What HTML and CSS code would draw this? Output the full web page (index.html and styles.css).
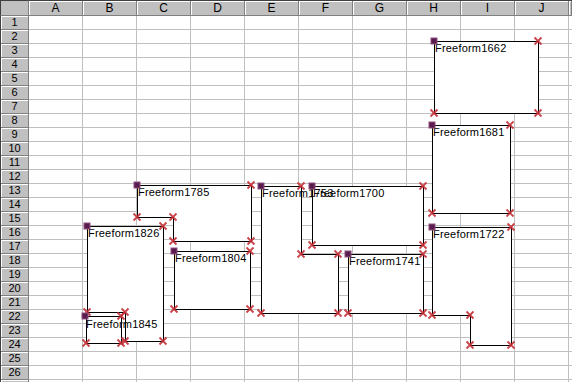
FILE: index.html
```html
<!DOCTYPE html>
<html lang="en">
<head>
    <meta charset="UTF-8">
    <title>Freeforms</title>
    <link rel="stylesheet" href="styles.css">
</head>
<body>

    <div class="sheet">
        <div class="corner"></div>
        <div class="col-heads">
            <div class="ch">A</div>
            <div class="ch">B</div>
            <div class="ch">C</div>
            <div class="ch">D</div>
            <div class="ch">E</div>
            <div class="ch">F</div>
            <div class="ch">G</div>
            <div class="ch">H</div>
            <div class="ch">I</div>
            <div class="ch">J</div>
            <div class="ch rest"></div>
        </div>
        <div class="row-heads">
            <div class="rh">1</div>
            <div class="rh">2</div>
            <div class="rh">3</div>
            <div class="rh">4</div>
            <div class="rh">5</div>
            <div class="rh">6</div>
            <div class="rh">7</div>
            <div class="rh">8</div>
            <div class="rh">9</div>
            <div class="rh">10</div>
            <div class="rh">11</div>
            <div class="rh">12</div>
            <div class="rh">13</div>
            <div class="rh">14</div>
            <div class="rh">15</div>
            <div class="rh">16</div>
            <div class="rh">17</div>
            <div class="rh">18</div>
            <div class="rh">19</div>
            <div class="rh">20</div>
            <div class="rh">21</div>
            <div class="rh">22</div>
            <div class="rh">23</div>
            <div class="rh">24</div>
            <div class="rh">25</div>
            <div class="rh">26</div>
            <div class="rh"></div>
        </div>
        <div class="cells"></div>

        <!-- freeform shapes drawn over the cells -->
        <svg class="shapes" width="572" height="382" viewBox="0 0 572 382">
            <defs>
                <path id="x" d="M-3.5,-3.5L3.5,3.5M3.5,-3.5L-3.5,3.5" class="mark-x"/>
                <rect id="s" x="-3" y="-3" width="6" height="6" class="mark-s"/>
            </defs>

            <g class="ff">
                <polygon points="434.5,41.5 538.5,41.5 538.5,113.5 434.5,113.5"/>
                <polygon points="432.5,125.5 510.5,125.5 510.5,213.5 432.5,213.5"/>
                <polygon points="312.5,186.5 423.5,186.5 423.5,245.5 312.5,245.5"/>
                <polygon points="432.5,227.5 511.5,227.5 511.5,345.5 470.5,345.5 470.5,315.5 432.5,315.5"/>
                <polygon points="348.5,254.5 423.5,254.5 423.5,313.5 348.5,313.5"/>
                <polygon points="261.5,186.5 301.5,186.5 301.5,254.5 338.5,254.5 338.5,313.5 261.5,313.5"/>
                <polygon points="137.5,185.5 251.5,185.5 251.5,241.5 173.5,241.5 173.5,217.5 137.5,217.5"/>
                <polygon points="174.5,251.5 250.5,251.5 250.5,309.5 174.5,309.5"/>
                <polygon points="87.5,226.5 163.5,226.5 163.5,341.5 125.5,341.5 125.5,312.5 87.5,312.5"/>
                <polygon points="86.5,316.5 121.5,316.5 121.5,343.5 86.5,343.5"/>
            </g>

            <g class="lbl">
                <text x="435" y="52">Freeform1662</text>
                <text x="433" y="136">Freeform1681</text>
                <text x="313" y="197">Freeform1700</text>
                <text x="433" y="238">Freeform1722</text>
                <text x="349" y="265">Freeform1741</text>
                <text x="262" y="197">Freeform1753</text>
                <text x="138" y="196">Freeform1785</text>
                <text x="175" y="262">Freeform1804</text>
                <text x="88" y="237">Freeform1826</text>
                <text x="86" y="328">Freeform1845</text>
            </g>

            <g>
                <use href="#x" x="538" y="41"/><use href="#x" x="538" y="113"/><use href="#x" x="434" y="113"/>
                <use href="#x" x="510" y="125"/><use href="#x" x="510" y="213"/><use href="#x" x="432" y="213"/>
                <use href="#x" x="423" y="186"/><use href="#x" x="423" y="245"/><use href="#x" x="312" y="245"/>
                <use href="#x" x="511" y="227"/><use href="#x" x="511" y="345"/><use href="#x" x="470" y="345"/><use href="#x" x="470" y="315"/><use href="#x" x="432" y="315"/>
                <use href="#x" x="423" y="254"/><use href="#x" x="423" y="313"/><use href="#x" x="348" y="313"/>
                <use href="#x" x="301" y="186"/><use href="#x" x="301" y="254"/><use href="#x" x="338" y="254"/><use href="#x" x="338" y="313"/><use href="#x" x="261" y="313"/>
                <use href="#x" x="251" y="185"/><use href="#x" x="251" y="241"/><use href="#x" x="173" y="241"/><use href="#x" x="173" y="217"/><use href="#x" x="137" y="217"/>
                <use href="#x" x="250" y="251"/><use href="#x" x="250" y="309"/><use href="#x" x="174" y="309"/>
                <use href="#x" x="163" y="226"/><use href="#x" x="163" y="341"/><use href="#x" x="125" y="341"/><use href="#x" x="125" y="312"/><use href="#x" x="87" y="312"/>
                <use href="#x" x="121" y="316"/><use href="#x" x="121" y="343"/><use href="#x" x="86" y="343"/>
            </g>

            <g>
                <use href="#s" x="434" y="41"/>
                <use href="#s" x="432" y="125"/>
                <use href="#s" x="312" y="186"/>
                <use href="#s" x="432" y="227"/>
                <use href="#s" x="348" y="254"/>
                <use href="#s" x="261" y="186"/>
                <use href="#s" x="137" y="185"/>
                <use href="#s" x="174" y="251"/>
                <use href="#s" x="87" y="226"/>
                <use href="#s" x="85" y="316"/>
            </g>
        </svg>
    </div>

</body>
</html>
```

FILE: styles.css
```css
body {
    margin: 0;
    background: #fff;
    font-family: 'Liberation Sans', Arial, sans-serif;
    font-size: 11px;
    color: #000;
    overflow: hidden;
}
.sheet {
    position: relative;
    width: 572px;
    height: 382px;
    display: grid;
    grid-template-columns: 29px 1fr;
    grid-template-rows: 16px 1fr;
    overflow: hidden;
}
.corner {
    background: #c0c0c0;
    border-right: 1px solid #808080;
    border-bottom: 1px solid #808080;
    border-top: 1px solid #404040;
    border-left: 1px solid #404040;
    box-sizing: border-box;
}
.col-heads {
    display: flex;
    border-top: 1px solid #404040;
    box-sizing: border-box;
}
.ch {
    flex: 0 0 54px;
    box-sizing: border-box;
    background: #c0c0c0;
    border-right: 1px solid #808080;
    border-bottom: 1px solid #808080;
    box-shadow: inset 1px 1px 0 #fff;
    text-align: center;
    font-size: 12px;
    line-height: 14px;
}
.ch.rest {
    flex: 1;
}
.row-heads {
    display: flex;
    flex-direction: column;
    border-left: 1px solid #404040;
}
.rh {
    flex: 0 0 14px;
    box-sizing: border-box;
    background: #c0c0c0;
    border-right: 1px solid #808080;
    border-bottom: 1px solid #808080;
    box-shadow: inset 1px 1px 0 #fff;
    text-align: center;
    line-height: 13px;
}
.cells {
    background-color: #fff;
    background-image:
        linear-gradient(to right, transparent 53px, #c0c0c0 53px),
        linear-gradient(to bottom, transparent 13px, #c0c0c0 13px);
    background-size: 54px 14px;
}
.shapes {
    position: absolute;
    left: 0;
    top: 0;
    pointer-events: none;
}
.ff polygon {
    fill: #fff;
    stroke: #000;
    stroke-width: 1;
    shape-rendering: crispEdges;
}
.lbl text {
    font-family: 'Liberation Sans', Arial, sans-serif;
    font-size: 11px;
    letter-spacing: 0.2px;
    fill: #000;
}
.mark-x {
    stroke: #c42f36;
    stroke-width: 1.8;
    fill: none;
    opacity: 0.9;
}
.mark-s {
    fill: #5a1c4c;
    stroke: #8e5080;
    stroke-width: 1;
}
```
